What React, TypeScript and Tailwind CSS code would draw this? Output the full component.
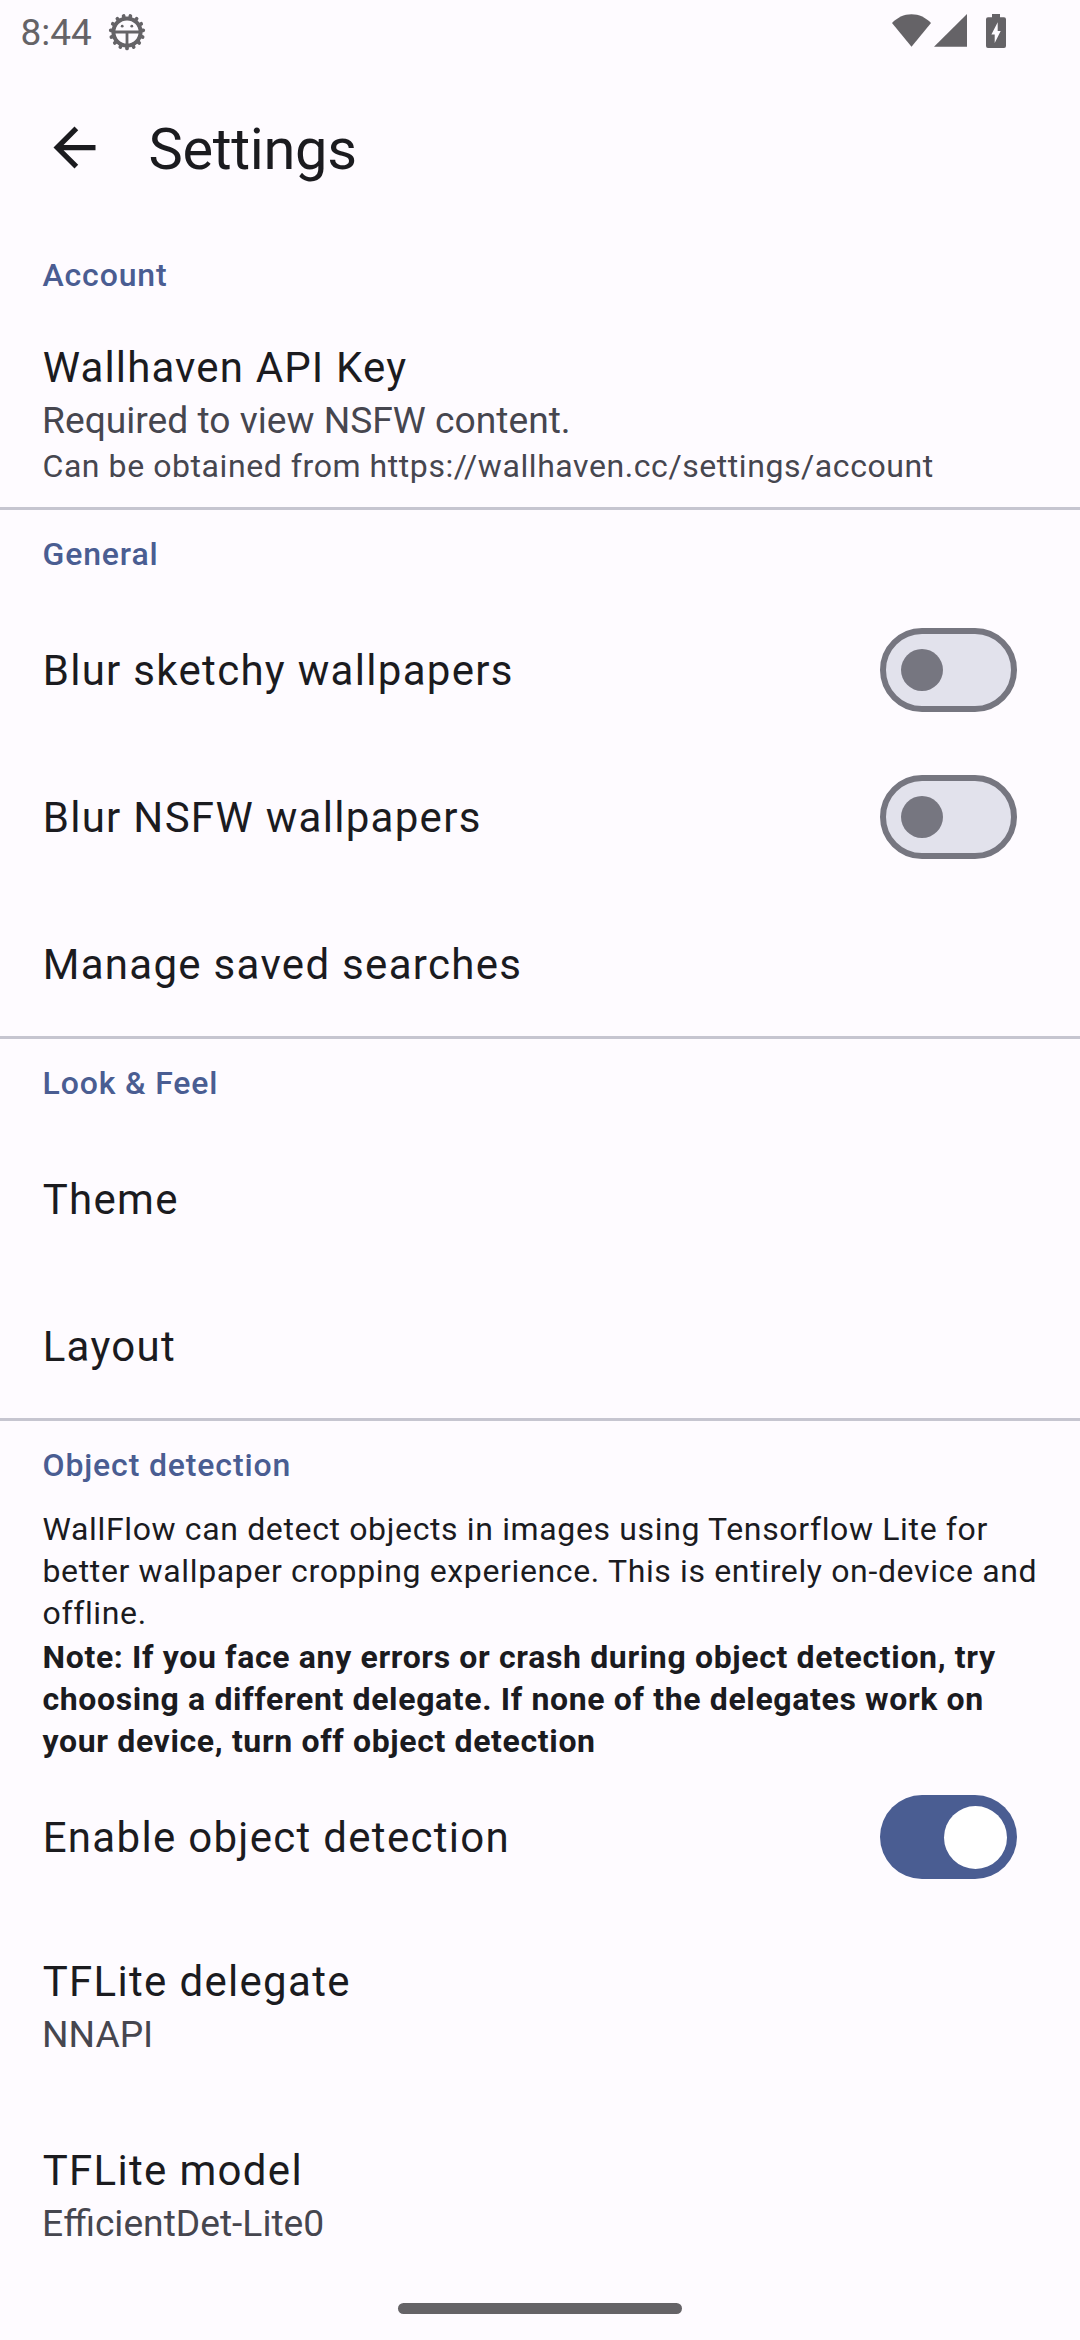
import type { ReactNode } from "react";

const TEETH = Array.from({ length: 15 }, (_, i) => (i * 360) / 15 + 12);

function DebugIcon() {
  return (
    <svg className="h-[38px] w-[38px]" viewBox="-19 -19 38 38" fill="none" stroke="#656367">
      <circle r="13.6" strokeWidth="4" />
      {TEETH.map((a) => (
        <path key={a} d="M0-14v-2.4" strokeWidth="3.7" strokeLinecap="round" transform={`rotate(${a})`} />
      ))}
      <path d="M-13 0H13M0 0V13" strokeWidth="2.8" />
      <circle cx="-4.8" cy="-5.8" r="1.4" fill="#656367" stroke="none" />
      <circle cx="4.8" cy="-5.8" r="1.4" fill="#656367" stroke="none" />
    </svg>
  );
}

function StatusBar() {
  return (
    <header className="flex h-[63px] shrink-0 items-start justify-between pr-[74px] pl-[20.5px] text-[#656367]">
      <div className="flex items-start">
        <span className="mt-[12px] w-[87.5px] text-[37px] leading-[42px]">8:44</span>
        <span className="mt-[13px]">
          <DebugIcon />
        </span>
      </div>
      <div className="mt-[14px] flex items-start">
        <svg className="h-[33px] w-[39px]" viewBox="0 0 39 33" fill="#656367">
          <path d="M0 9C5 3.6 12 .2 19.5 .2S34 3.6 39 9L19.5 32.7z" />
        </svg>
        <svg className="ml-[3px] h-[33px] w-[33px]" viewBox="0 0 33 33" fill="#656367">
          <path d="M33 0v32.7H0z" />
        </svg>
        <svg className="ml-[19px] h-[34px] w-[20px]" viewBox="0 0 20 34" fill="#656367">
          <path
            fillRule="evenodd"
            d="M6 0h8v3.3h4a2 2 0 0 1 2 2V32a2 2 0 0 1-2 2H2a2 2 0 0 1-2-2V5.300a2 2 0 0 1 2-2h4zM11.700 8.200 5.400 20.500h3.300v8.600L14.700 17h-3z"
          />
        </svg>
      </div>
    </header>
  );
}

function AppBar() {
  return (
    <div className="flex h-[168px] shrink-0 items-center pl-[43px]">
      <svg className="h-[63px] w-[63px]" viewBox="0 0 24 24" fill="#1b1b1f">
        <path d="M20 11H7.830l5.590-5.590L12 4l-8 8 8 8 1.410-1.410L7.830 13H20v-2z" />
      </svg>
      <h1 className="mt-[4px] ml-[42.5px] text-[57.75px] leading-[74px] tracking-[-0.34px]">Settings</h1>
    </div>
  );
}

function SectionLabel({ children }: { children: ReactNode }) {
  return (
    <h2 className="h-[85px] px-[42.5px] pt-[23px] text-[32px] leading-[42px] font-medium tracking-[0.85px] text-[#4a5d92]">
      {children}
    </h2>
  );
}

function Divider() {
  return <div className="h-[3px] w-full bg-[#c6c5d0]" />;
}

function Toggle({ on }: { on: boolean }) {
  return on ? (
    <div className="flex h-[84px] w-[137px] items-center justify-end rounded-full bg-[#4a5d92] pr-[10.5px]">
      <div className="size-[63px] rounded-full bg-white" />
    </div>
  ) : (
    <div className="flex h-[84px] w-[137px] items-center rounded-full border-[6px] border-[#767680] bg-[#e2e2ec] pl-[15px]">
      <div className="size-[42px] rounded-full bg-[#767680]" />
    </div>
  );
}

function Row({ title, on }: { title: string; on?: boolean }) {
  return (
    <div className="flex h-[147px] items-center justify-between pt-[3px] pr-[63px] pl-[42.7px]">
      <span className="text-[42px] leading-[63px] tracking-[1.3px]">{title}</span>
      {on !== undefined && <Toggle on={on} />}
    </div>
  );
}

function DetailRow({ title, value }: { title: string; value: string }) {
  return (
    <div className="h-[189px] px-[42px] pt-[45px]">
      <p className="pl-[0.7px] text-[42px] leading-[56px] tracking-[1.31px]">{title}</p>
      <p className="text-[37.2px] leading-[49px] text-[#46464f]">{value}</p>
    </div>
  );
}

export default function App() {
  return (
    <div className="flex h-[2340px] w-[1080px] flex-col overflow-hidden bg-[#fefbff] font-[Roboto,sans-serif] text-[#1b1b1f]">
      <StatusBar />
      <AppBar />
      <main className="flex-1">
        <section className="h-[276px]">
          <SectionLabel>Account</SectionLabel>
          <div className="px-[42px] pt-[24px]">
            <p className="pl-[0.7px] text-[42px] leading-[56px] tracking-[1.15px]">Wallhaven API Key</p>
            <p className="text-[37.2px] leading-[49px] text-[#46464f]">Required to view NSFW content.</p>
            <p className="pl-[0.5px] text-[32px] leading-[43px] tracking-[0.57px] text-[#46464f]">
              Can be obtained from https://wallhaven.cc/settings/account
            </p>
          </div>
        </section>
        <Divider />
        <section>
          <SectionLabel>General</SectionLabel>
          <Row title="Blur sketchy wallpapers" on={false} />
          <Row title="Blur NSFW wallpapers" on={false} />
          <Row title="Manage saved searches" />
        </section>
        <Divider />
        <section>
          <SectionLabel>Look &amp; Feel</SectionLabel>
          <Row title="Theme" />
          <Row title="Layout" />
        </section>
        <Divider />
        <section>
          <SectionLabel>Object detection</SectionLabel>
          <div className="h-[256px] pt-[2px] pr-[30px] pl-[42.5px] text-[32px] leading-[42px] tracking-[0.64px]">
            <p>
              WallFlow can detect objects in images using Tensorflow Lite for
              <br />
              better wallpaper cropping experience. This is entirely on-device and
              <br />
              offline.
            </p>
            <p className="mt-[2px] font-bold tracking-[0.64px]">
              Note: If you face any errors or crash during object detection, try
              <br />
              choosing a different delegate. If none of the delegates work on
              <br />
              your device, turn off object detection
            </p>
          </div>
          <Row title="Enable object detection" on />
          <DetailRow title="TFLite delegate" value="NNAPI" />
          <DetailRow title="TFLite model" value="EfficientDet-Lite0" />
        </section>
      </main>
      <footer className="flex h-[37px] shrink-0 justify-center">
        <div className="h-[11px] w-[284px] rounded-full bg-[#656367]" />
      </footer>
    </div>
  );
}
